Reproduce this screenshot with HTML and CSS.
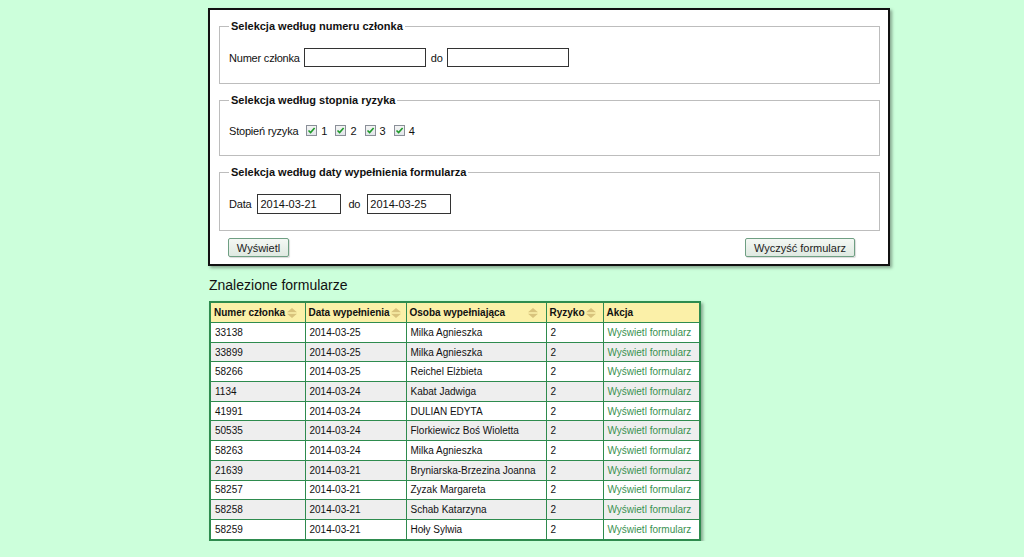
FILE: index.html
```html
<!DOCTYPE html>
<html lang="pl">
<head>
<meta charset="utf-8">
<title>Formularze</title>
<link rel="stylesheet" href="styles.css">
</head>
<body>
<div class="page">
  <form class="panel">
    <fieldset class="group">
      <legend>Selekcja według numeru członka</legend>
      <div class="row">
        <span class="lbl">Numer członka</span>
        <input class="txt w122 first" type="text">
        <span class="lbl do">do</span>
        <input class="txt w122" type="text">
      </div>
    </fieldset>
    <fieldset class="group g2">
      <legend>Selekcja według stopnia ryzyka</legend>
      <div class="row">
        <span class="lbl">Stopień ryzyka</span>
        <span class="chk"><span class="box"><svg viewBox="0 0 9 9" width="9" height="9"><path d="M1.5 4.5 L3.6 6.6 L7.6 2" fill="none" stroke="#1f9a2a" stroke-width="1.6"/></svg></span>1</span>
        <span class="chk"><span class="box"><svg viewBox="0 0 9 9" width="9" height="9"><path d="M1.5 4.5 L3.6 6.6 L7.6 2" fill="none" stroke="#1f9a2a" stroke-width="1.6"/></svg></span>2</span>
        <span class="chk"><span class="box"><svg viewBox="0 0 9 9" width="9" height="9"><path d="M1.5 4.5 L3.6 6.6 L7.6 2" fill="none" stroke="#1f9a2a" stroke-width="1.6"/></svg></span>3</span>
        <span class="chk"><span class="box"><svg viewBox="0 0 9 9" width="9" height="9"><path d="M1.5 4.5 L3.6 6.6 L7.6 2" fill="none" stroke="#1f9a2a" stroke-width="1.6"/></svg></span>4</span>
      </div>
    </fieldset>
    <fieldset class="group g3">
      <legend>Selekcja według daty wypełnienia formularza</legend>
      <div class="row">
        <span class="lbl">Data</span>
        <input class="txt w84 date1" type="text" value="2014-03-21">
        <span class="lbl do2">do</span>
        <input class="txt w84" type="text" value="2014-03-25">
      </div>
    </fieldset>
    <div class="buttons">
      <button type="button" class="btn b1">Wyświetl</button>
      <button type="button" class="btn b2">Wyczyść formularz</button>
    </div>
  </form>

  <h2 class="title">Znalezione formularze</h2>

  <table class="results">
    <colgroup>
      <col class="c1"><col class="c2"><col class="c3"><col class="c4"><col class="c5">
    </colgroup>
    <thead>
      <tr>
        <th><span class="th">Numer członka<svg class="sort" viewBox="0 0 12 10" width="12" height="10"><path d="M6 0 L11 4.3 H1 Z M1 5.7 H11 L6 10 Z" fill="#d8c37c"/></svg></span></th>
        <th><span class="th">Data wypełnienia<svg class="sort" viewBox="0 0 12 10" width="12" height="10"><path d="M6 0 L11 4.3 H1 Z M1 5.7 H11 L6 10 Z" fill="#d8c37c"/></svg></span></th>
        <th><span class="th">Osoba wypełniająca<svg class="sort" viewBox="0 0 12 10" width="12" height="10"><path d="M6 0 L11 4.3 H1 Z M1 5.7 H11 L6 10 Z" fill="#d8c37c"/></svg></span></th>
        <th><span class="th">Ryzyko<svg class="sort" viewBox="0 0 12 10" width="12" height="10"><path d="M6 0 L11 4.3 H1 Z M1 5.7 H11 L6 10 Z" fill="#d8c37c"/></svg></span></th>
        <th>Akcja</th>
      </tr>
    </thead>
    <tbody>
      <tr><td>33138</td><td>2014-03-25</td><td>Milka Agnieszka</td><td>2</td><td><a href="#">Wyświetl formularz</a></td></tr>
      <tr><td>33899</td><td>2014-03-25</td><td>Milka Agnieszka</td><td>2</td><td><a href="#">Wyświetl formularz</a></td></tr>
      <tr><td>58266</td><td>2014-03-25</td><td>Reichel Elżbieta</td><td>2</td><td><a href="#">Wyświetl formularz</a></td></tr>
      <tr><td>1134</td><td>2014-03-24</td><td>Kabat Jadwiga</td><td>2</td><td><a href="#">Wyświetl formularz</a></td></tr>
      <tr><td>41991</td><td>2014-03-24</td><td>DULIAN EDYTA</td><td>2</td><td><a href="#">Wyświetl formularz</a></td></tr>
      <tr><td>50535</td><td>2014-03-24</td><td>Florkiewicz Boś Wioletta</td><td>2</td><td><a href="#">Wyświetl formularz</a></td></tr>
      <tr><td>58263</td><td>2014-03-24</td><td>Milka Agnieszka</td><td>2</td><td><a href="#">Wyświetl formularz</a></td></tr>
      <tr><td>21639</td><td>2014-03-21</td><td>Bryniarska-Brzezina Joanna</td><td>2</td><td><a href="#">Wyświetl formularz</a></td></tr>
      <tr><td>58257</td><td>2014-03-21</td><td>Zyzak Margareta</td><td>2</td><td><a href="#">Wyświetl formularz</a></td></tr>
      <tr><td>58258</td><td>2014-03-21</td><td>Schab Katarzyna</td><td>2</td><td><a href="#">Wyświetl formularz</a></td></tr>
      <tr><td>58259</td><td>2014-03-21</td><td>Hoły Sylwia</td><td>2</td><td><a href="#">Wyświetl formularz</a></td></tr>
    </tbody>
  </table>
</div>
</body>
</html>
```

FILE: styles.css
```css
html, body {
  margin: 0;
  padding: 0;
  background: #ccffdb;
  font-family: "Liberation Sans", Arial, sans-serif;
  font-size: 11px;
  color: #111;
}

.page {
  padding: 8px 0 0 208px;
}

.panel {
  box-sizing: border-box;
  width: 682px;
  background: #fff;
  border: 2px solid #111;
  padding: 0 8px 7px 9px;
  box-shadow: 2px 2px 3px rgba(0, 0, 0, 0.35);
  margin: 0;
}

.group {
  margin: 10px 0 0 0;
  padding: 15px 9px 16px 9px;
  border: 1px solid #bdbdbd;
  min-width: 0;
}

.group legend {
  font-weight: bold;
  font-size: 11px;
  line-height: 13px;
  padding: 0 2px;
  color: #111;
}

.row {
  display: flex;
  align-items: center;
  height: 19px;
}

.g2 .row {
  height: 17px;
}

.g3 .row {
  height: 20px;
}

.lbl {
  line-height: 18px;
  letter-spacing: -0.2px;
}

.txt {
  box-sizing: border-box;
  height: 19px;
  border: 1px solid #333;
  padding: 0 2px;
  margin: 0 0 0 4px;
  font-family: "Liberation Sans", Arial, sans-serif;
  font-size: 11px;
  color: #111;
  background: #fff;
  outline: none;
}

.w122 { width: 122px; }
.w84 { width: 84px; height: 20px; }
.first { margin-left: 4px; }
.date1 { margin-left: 6px; }

.do { margin-left: 5px; }
.do2 { margin-left: 7px; margin-right: 3px; }

.chk {
  display: inline-flex;
  align-items: center;
  margin-left: 8px;
}

.chk:first-of-type { margin-left: 10px; }

.box {
  box-sizing: border-box;
  width: 11px;
  height: 11px;
  border: 1px solid #8a8f98;
  background: linear-gradient(#f4f4f4, #e2e6ea);
  display: inline-flex;
  align-items: center;
  justify-content: center;
  margin-right: 4px;
}

.box svg { display: block; }

.buttons {
  display: flex;
  justify-content: space-between;
  margin: 7px 25px 0 9px;
}

.btn {
  box-sizing: border-box;
  height: 19px;
  border: 1px solid #6f9f83;
  border-radius: 2px;
  background: linear-gradient(#f4f8f4, #dfe9e1);
  font-family: "Liberation Sans", Arial, sans-serif;
  font-size: 11px;
  color: #222;
  padding: 0 6px;
  box-shadow: 1px 1px 1px rgba(0, 0, 0, 0.15);
}

.b1 { width: 61px; }
.b2 { width: 110px; }

.title {
  font-size: 14px;
  font-weight: normal;
  color: #111;
  margin: 11px 0 0 1px;
  line-height: 16px;
  height: 16px;
}

.results {
  margin: 8px 0 0 1px;
  border-collapse: collapse;
  border: 2px solid #2e8b4e;
  width: 490px;
  table-layout: fixed;
  box-shadow: 2px 2px 3px rgba(0, 0, 0, 0.35);
  background: #fff;
  font-size: 10px;
}

.c1 { width: 95px; }
.c2 { width: 101px; }
.c3 { width: 140px; }
.c4 { width: 57px; }
.c5 { width: 97px; }

.results th {
  background: #fbf0a8;
  text-align: left;
  font-weight: bold;
  font-size: 10px;
  height: 19px;
  padding: 0 3px;
  border: 1px solid #2e8b4e;
  white-space: nowrap;
}

.th {
  display: flex;
  align-items: center;
  justify-content: space-between;
}

.sort { display: block; margin-right: 4px; flex: none; }

.results td {
  height: 18.7px;
  padding: 0 4px;
  border: 1px solid #2e8b4e;
  white-space: nowrap;
  overflow: hidden;
  font-size: 10px;
}

.results tbody tr:nth-child(even) td {
  background: #eeeeee;
}

.results a {
  color: #3a9150;
  text-decoration: none;
}
```
